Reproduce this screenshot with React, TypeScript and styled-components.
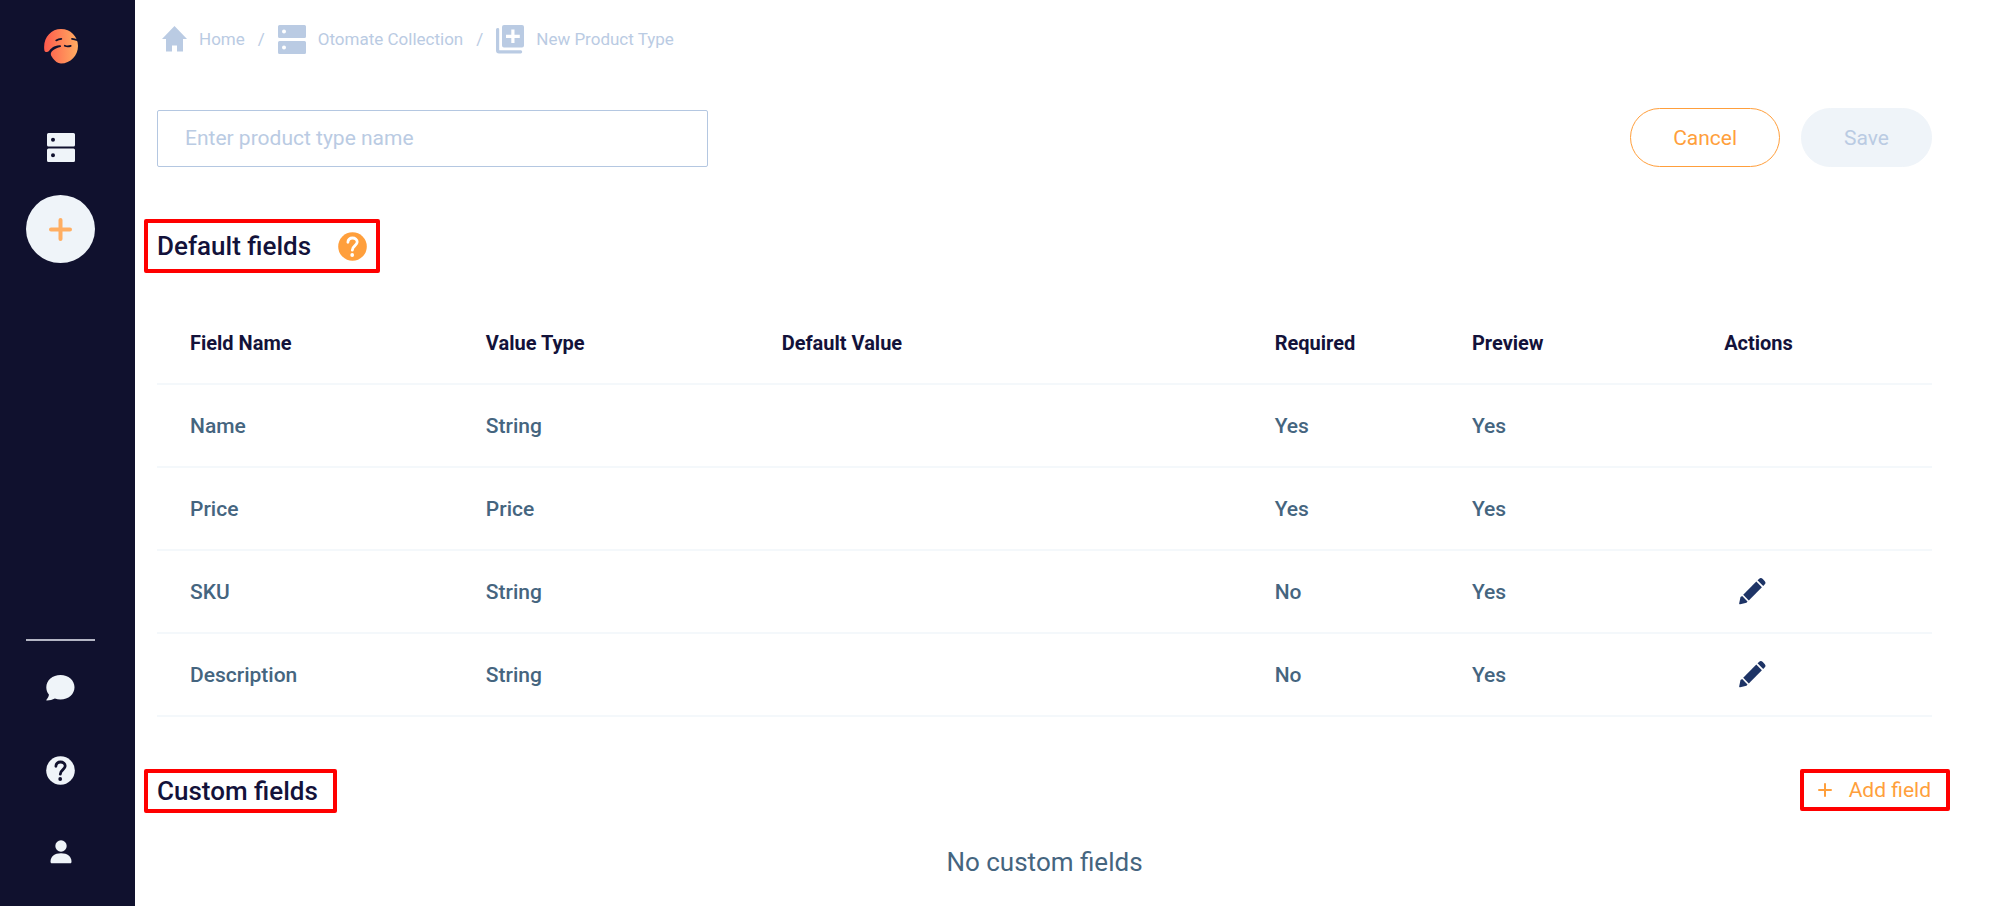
import React from "react";
import styled, { createGlobalStyle, css } from "styled-components";

const color = {
  navy: "#10112e",
  ink: "#13123a",
  slate: "#45657f",
  mist: "#bacbe3",
  ice: "#eff4f9",
  line: "#f4f8fb",
  orange: "#ff9f3c",
  pencil: "#1e3466",
  mark: "#ff0000",
};

const GlobalStyle = createGlobalStyle`
  *, *::before, *::after { box-sizing: border-box; }
  body {
    margin: 0;
    background: #fff;
    color: ${color.ink};
    font-family: Roboto, "Liberation Sans", sans-serif;
  }
  button, input { font: inherit; }
  svg { display: block; }
`;

const Page = styled.div`
  display: flex;
  min-height: 100vh;
`;

const Sidebar = styled.nav`
  flex: none;
  width: 135px;
  padding: 28px 14px 30px 0;
  background: ${color.navy};
  color: ${color.ice};
  display: flex;
  flex-direction: column;
  align-items: center;
`;

const NavLink = styled.a`
  display: flex;
  align-items: center;
  justify-content: center;
  width: 48px;
  height: 48px;
  color: inherit;
`;

const Logo = styled(NavLink)`
  height: 36px;
  margin-bottom: 59px;
`;

const AddButton = styled.button`
  display: flex;
  align-items: center;
  justify-content: center;
  width: 69px;
  height: 68px;
  margin-top: 24px;
  padding: 0;
  border: 0;
  border-radius: 50%;
  background: ${color.ice};
  color: #ffae62;
`;

const NavFooter = styled.div`
  margin-top: auto;
  display: flex;
  flex-direction: column;
  align-items: center;
  gap: 34px;
`;

const Divider = styled.hr`
  width: 69px;
  height: 2px;
  margin: 0 0 -11px;
  border: 0;
  background: #b4b6c4;
`;

const Main = styled.main`
  flex: 1;
  min-width: 0;
  padding: 24px 67px 24px 22px;
`;

const Breadcrumbs = styled.nav`
  display: flex;
  align-items: center;
  height: 30px;
  margin: 0 0 54px 5px;
  gap: 13px;
  font-size: 17px;
  line-height: 30px;
  color: ${color.mist};
`;

const Crumb = styled.a`
  display: flex;
  align-items: center;
  gap: 12px;
  color: inherit;
  text-decoration: none;
`;

const Toolbar = styled.div`
  display: flex;
  align-items: flex-end;
  justify-content: space-between;
  gap: 21px;
  margin-bottom: 52px;
`;

const NameInput = styled.input`
  width: 551px;
  height: 57px;
  padding: 0 27px 2px;
  border: 1px solid #b4c7e1;
  border-radius: 2px;
  background: #fff;
  color: ${color.ink};
  font-size: 21px;
  &::placeholder { color: ${color.mist}; opacity: 1; }
`;

const ButtonGroup = styled.div`
  display: flex;
  gap: 21px;
`;

const PillButton = styled.button<{ $outlined?: boolean }>`
  height: 59px;
  padding: 0 42px;
  border-radius: 30px;
  border: 1px solid ${color.ice};
  background: ${color.ice};
  color: ${color.mist};
  font-size: 21px;
  ${(p) =>
    p.$outlined &&
    css`
      border-color: ${color.orange};
      background: #fff;
      color: ${color.orange};
    `}
`;

const Marked = styled.div<{ $side?: "left" | "right" }>`
  display: inline-flex;
  align-items: center;
  gap: 27px;
  border: 4px solid ${color.mark};
  border-radius: 2px;
  ${(p) =>
    p.$side === "right"
      ? "margin-right: -18px; padding: 5px 15px 5px 11px;"
      : "margin-left: -13px; padding: 0 9px;"}
`;

const SectionHeader = styled.header`
  display: flex;
  align-items: flex-start;
  justify-content: space-between;
`;

const SectionTitle = styled.h2<{ $tall?: boolean }>`
  margin: 0;
  padding-right: ${(p) => (p.$tall ? 0 : 6)}px;
  font-size: 26px;
  font-weight: 500;
  line-height: ${(p) => (p.$tall ? 46 : 36)}px;
`;

const HelpButton = styled.button`
  padding: 0;
  border: 0;
  background: none;
  color: ${color.orange};
`;

const FieldTable = styled.table`
  width: 100%;
  margin: 29px 0 52px;
  border-collapse: separate;
  border-spacing: 0;
  table-layout: fixed;
  text-align: left;
`;

const cell = css<{ $action?: boolean }>`
  height: 83px;
  padding: 0 0 0 ${(p) => (p.$action ? 88 : 33)}px;
  border-bottom: 2px solid ${color.line};
`;

const HeadCell = styled.th`
  ${cell}
  font-size: 20px;
  font-weight: 700;
`;

const Cell = styled.td`
  ${cell}
  color: ${color.slate};
  font-size: 21px;
  font-weight: 500;
`;

const EditButton = styled.button`
  display: block;
  padding: 8px 15px;
  border: 0;
  background: none;
  color: ${color.pencil};
`;

const AddFieldButton = styled.button`
  display: flex;
  align-items: center;
  gap: 17px;
  height: 24px;
  padding: 0 0 0 3px;
  border: 0;
  background: none;
  color: ${color.orange};
  font-size: 21px;
`;

const Empty = styled.p`
  margin: 33px 0 0;
  color: ${color.slate};
  font-size: 26px;
  line-height: 32px;
  text-align: center;
`;

const LogoMark = () => (
  <svg width="34" height="35" viewBox="0 0 34 35" aria-hidden="true">
    <defs>
      <linearGradient id="sun" x1="0" y1="0" x2="1" y2="0">
        <stop offset="0" stopColor="#ff5a4c" />
        <stop offset="1" stopColor="#ffad62" />
      </linearGradient>
    </defs>
    <path
      fill="url(#sun)"
      d="M17 0C26.500 0 34 7.500 34 17S26.500 34.500 17 34.500C13.500 34.500 11 32 9 29.500C7 27 6.500 25.500 7 24C8 21.500 10.500 19.500 16.500 18C17.500 17.500 17 16.200 15.500 16.300C9.500 16.800 7 19.500 5 22C3.800 23.400 1 23.600.4 21.500C-1.500 9.500 6.500 0 17 0Z"
    />
    <g stroke={color.navy} strokeWidth="1.800" strokeLinecap="round" fill="none">
      <path d="M12.200 11.400Q14.500 10 17.300 9.800" />
      <path d="M28 9.800Q30.500 9.900 33.500 11.300" />
      <path d="M20.800 16.800Q23.500 18 26.700 16.900" />
    </g>
  </svg>
);

const StorageIcon = ({ gap = 2 }: { gap?: number }) => {
  const h = (29 - gap) / 2;
  const row = (y: number) =>
    `M1.500 ${y}h25a1.500 1.500 0 0 1 1.500 1.500v${h - 3}a1.500 1.500 0 0 1-1.500 1.500h-25a1.500 1.500 0 0 1-1.500-1.500v-${h - 3}a1.500 1.500 0 0 1 1.500-1.500z` +
    `M6 ${y + h / 2 - 2}a2 2 0 1 0 0 4a2 2 0 1 0 0-4z`;
  return (
    <svg width="28" height="29" viewBox="0 0 28 29" fill="currentColor" fillRule="evenodd" aria-hidden="true">
      <path d={row(0)} />
      <path d={row(h + gap)} />
    </svg>
  );
};

const HomeIcon = () => (
  <svg width="25" height="26" viewBox="0 0 25 26" fill="currentColor" aria-hidden="true">
    <path d="M12.500 0L25 13h-4v12.500h-6v-6h-5v6H4V13H0z" />
  </svg>
);

const LibraryAddIcon = () => (
  <svg width="28" height="29" viewBox="0 0 28 29" fill="currentColor" fillRule="evenodd" aria-hidden="true">
    <path d="M8 0h18a2 2 0 0 1 2 2v18.500a2 2 0 0 1-2 2H8a2 2 0 0 1-2-2V2a2 2 0 0 1 2-2zM15.300 4.500v5.200h-5.300v3.200h5.300v5.200h3.200v-5.200h5.300V9.700h-5.300V4.500z" />
    <path d="M1.500 3A1.500 1.500 0 0 1 3.200 4.500V25.300H24A1.500 1.500 0 0 1 25 28.500H3a3 3 0 0 1-3-3V4.500A1.500 1.500 0 0 1 1.500 3z" />
  </svg>
);

const PlusIcon = ({ size, weight }: { size: number; weight: number }) => (
  <svg
    width={size}
    height={size}
    viewBox={`0 0 ${size} ${size}`}
    stroke="currentColor"
    strokeWidth={weight}
    strokeLinecap="round"
    aria-hidden="true"
  >
    <path d={`M${size / 2} ${weight / 2}V${size - weight / 2}M${weight / 2} ${size / 2}H${size - weight / 2}`} />
  </svg>
);

const ChatIcon = () => (
  <svg width="29" height="26" viewBox="0 0 29 26" fill="currentColor" aria-hidden="true">
    <path d="M14.500 0C22.500 0 28.500 5.300 28.500 12.200S22.500 24.500 14.500 24.500C12.500 24.500 10.600 24.200 8.900 23.600C6.500 24.900 3.700 25.500 1 25.600C.3 25.600.1 25 .6 24.500C2 23 2.900 21.200 2.900 19.500C1.200 17.500.3 15 .3 12.200C.3 5.300 6.500 0 14.500 0Z" />
  </svg>
);

const HelpIcon = ({ mark }: { mark: string }) => (
  <svg width="29" height="29" viewBox="0 0 29 29" aria-hidden="true">
    <circle cx="14.500" cy="14.500" r="14.300" fill="currentColor" />
    <path
      d="M9.900 10.300C9.900 7.400 12 6 14.500 6S19.200 7.500 19.200 10.100C19.200 13.600 14.300 13.800 14.300 18.200"
      fill="none"
      stroke={mark}
      strokeWidth="2.800"
      strokeLinecap="round"
    />
    <circle cx="14.200" cy="23" r="1.900" fill={mark} />
  </svg>
);

const UserIcon = () => (
  <svg width="22" height="24" viewBox="0 0 22 24" fill="currentColor" aria-hidden="true">
    <circle cx="11" cy="6" r="5.700" />
    <path d="M.5 21.500C.5 16.500 4.500 13.200 11 13.200S21.500 16.500 21.500 21.500C21.500 22.800 21 23.300 20 23.300H2C1 23.300 .5 22.800 .5 21.500Z" />
  </svg>
);

const PencilIcon = () => (
  <svg width="27" height="27" viewBox="0 0 27 27" fill="currentColor" aria-hidden="true">
    <path d="M18.500 2.300L20 .9C21.200-.2 22.500-.2 23.800 1L25.600 2.900C26.800 4.200 26.800 5.400 25.600 6.600L24.200 8.100z" />
    <path d="M17.300 3.600L22.900 9.300L9.800 22.400L4.200 16.700z" />
    <path d="M3.200 18L8.500 23.500L7.500 24.800L1.200 26.200C.4 26.300 .1 26 .2 25.200L1.500 18.900z" />
  </svg>
);

type Field = { name: string; type: string; required: string; preview: string; editable?: boolean };

const fields: Field[] = [
  { name: "Name", type: "String", required: "Yes", preview: "Yes" },
  { name: "Price", type: "Price", required: "Yes", preview: "Yes" },
  { name: "SKU", type: "String", required: "No", preview: "Yes", editable: true },
  { name: "Description", type: "String", required: "No", preview: "Yes", editable: true },
];

const columnSpans = [3, 3, 5, 2, 2, 3];

const Column = styled.col<{ $span: number }>`
  width: calc(100% * ${(p) => p.$span} / 18);
`;

export default function App() {
  return (
    <>
      <GlobalStyle />
      <Page>
        <Sidebar aria-label="Primary">
          <Logo href="#" aria-label="Otomate">
            <LogoMark />
          </Logo>
          <NavLink href="#collections" aria-label="Collections">
            <StorageIcon />
          </NavLink>
          <AddButton type="button" aria-label="Create">
            <PlusIcon size={23} weight={4} />
          </AddButton>
          <NavFooter>
            <Divider />
            <NavLink href="#chat" aria-label="Chat">
              <ChatIcon />
            </NavLink>
            <NavLink href="#help" aria-label="Help">
              <HelpIcon mark={color.navy} />
            </NavLink>
            <NavLink href="#account" aria-label="Account">
              <UserIcon />
            </NavLink>
          </NavFooter>
        </Sidebar>

        <Main>
          <Breadcrumbs aria-label="Breadcrumb">
            <Crumb href="#home">
              <HomeIcon />
              Home
            </Crumb>
            <span>/</span>
            <Crumb href="#collection">
              <StorageIcon gap={3} />
              Otomate Collection
            </Crumb>
            <span>/</span>
            <Crumb href="#new" aria-current="page">
              <LibraryAddIcon />
              New Product Type
            </Crumb>
          </Breadcrumbs>

          <Toolbar>
            <NameInput type="text" aria-label="Product type name" placeholder="Enter product type name" />
            <ButtonGroup>
              <PillButton type="button" $outlined>
                Cancel
              </PillButton>
              <PillButton type="button">Save</PillButton>
            </ButtonGroup>
          </Toolbar>

          <section>
            <SectionHeader>
              <Marked>
                <SectionTitle $tall>Default fields</SectionTitle>
                <HelpButton type="button" aria-label="About default fields">
                  <HelpIcon mark="#fff" />
                </HelpButton>
              </Marked>
            </SectionHeader>
            <FieldTable>
              <colgroup>
                {columnSpans.map((span, i) => (
                  <Column key={i} $span={span} />
                ))}
              </colgroup>
              <thead>
                <tr>
                  <HeadCell scope="col">Field Name</HeadCell>
                  <HeadCell scope="col">Value Type</HeadCell>
                  <HeadCell scope="col">Default Value</HeadCell>
                  <HeadCell scope="col">Required</HeadCell>
                  <HeadCell scope="col">Preview</HeadCell>
                  <HeadCell scope="col" $action>
                    Actions
                  </HeadCell>
                </tr>
              </thead>
              <tbody>
                {fields.map((field) => (
                  <tr key={field.name}>
                    <Cell>{field.name}</Cell>
                    <Cell>{field.type}</Cell>
                    <Cell />
                    <Cell>{field.required}</Cell>
                    <Cell>{field.preview}</Cell>
                    <Cell $action>
                      {field.editable && (
                        <EditButton type="button" aria-label={`Edit ${field.name}`}>
                          <PencilIcon />
                        </EditButton>
                      )}
                    </Cell>
                  </tr>
                ))}
              </tbody>
            </FieldTable>
          </section>

          <section>
            <SectionHeader>
              <Marked>
                <SectionTitle>Custom fields</SectionTitle>
              </Marked>
              <Marked $side="right">
                <AddFieldButton type="button">
                  <PlusIcon size={14} weight={2} />
                  Add field
                </AddFieldButton>
              </Marked>
            </SectionHeader>
            <Empty>No custom fields</Empty>
          </section>
        </Main>
      </Page>
    </>
  );
}
